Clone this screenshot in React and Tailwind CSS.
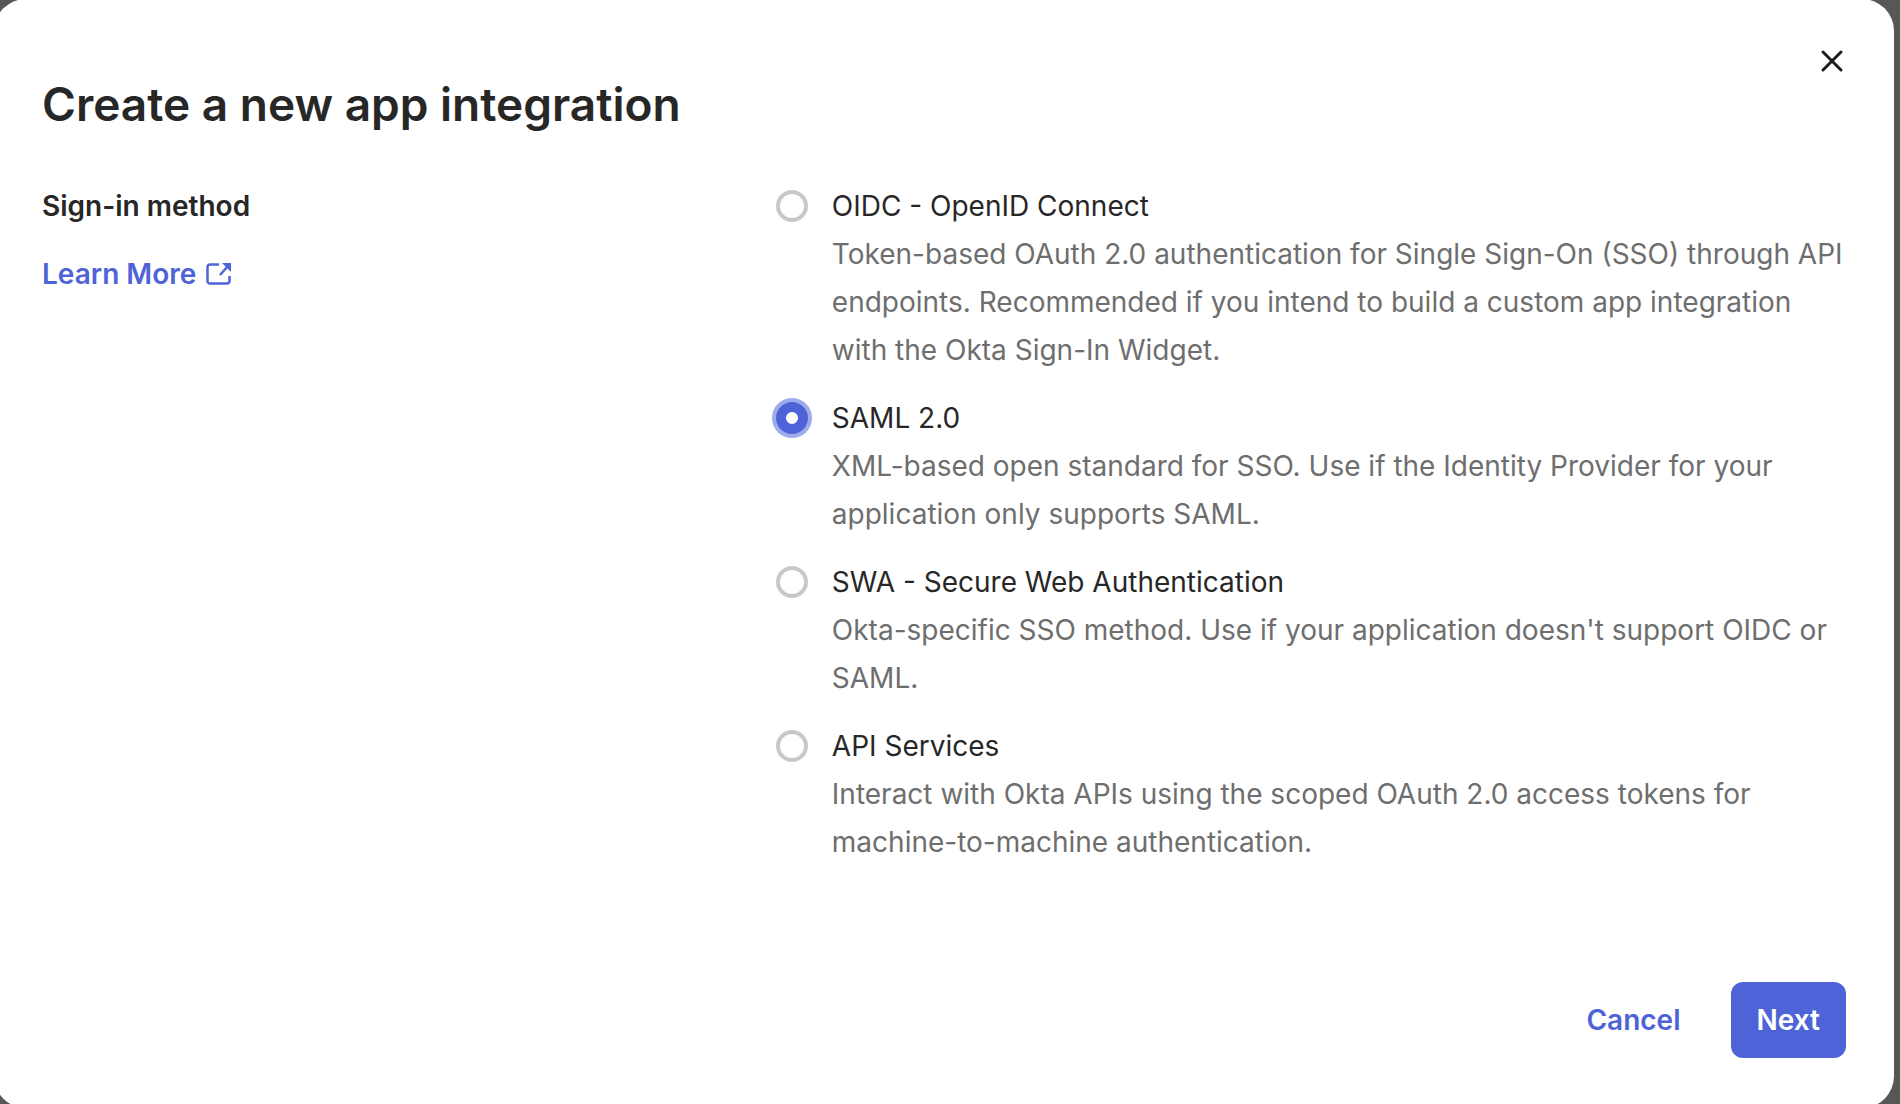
import { useState } from "react";

const signInMethods = [
  {
    id: "oidc",
    name: "OIDC - OpenID Connect",
    description:
      "Token-based OAuth 2.0 authentication for Single Sign-On (SSO) through API endpoints. Recommended if you intend to build a custom app integration with the Okta Sign-In Widget.",
  },
  {
    id: "saml",
    name: "SAML 2.0",
    description:
      "XML-based open standard for SSO. Use if the Identity Provider for your application only supports SAML.",
  },
  {
    id: "swa",
    name: "SWA - Secure Web Authentication",
    description:
      "Okta-specific SSO method. Use if your application doesn't support OIDC or SAML.",
  },
  {
    id: "api",
    name: "API Services",
    description:
      "Interact with Okta APIs using the scoped OAuth 2.0 access tokens for machine-to-machine authentication.",
  },
];

const CloseIcon = () => (
  <svg width="24" height="24" viewBox="0 0 24 24" fill="none" aria-hidden="true">
    <path d="M3 3L21 21M21 3L3 21" stroke="#1d1d21" strokeWidth="3" strokeLinecap="round" />
  </svg>
);

const ExternalIcon = () => (
  <svg width="26" height="24" viewBox="0 0 26 24" fill="none" aria-hidden="true">
    <path
      d="M13 2.5H4A2.5 2.5 0 0 0 1.5 5V19A2.5 2.5 0 0 0 4 21.5H21A2.5 2.5 0 0 0 23.5 19V14"
      stroke="currentColor"
      strokeWidth="2.5"
    />
    <path d="M14 13L22 4" stroke="currentColor" strokeWidth="2.5" />
    <path d="M16 1H25V10Z" fill="currentColor" />
  </svg>
);

const App = () => {
  const [method, setMethod] = useState("saml");

  return (
    <div className="flex min-h-screen overflow-hidden bg-[#575757] font-['Inter',sans-serif] text-[28px] leading-[48px] text-[#272727]">
      <div
        role="dialog"
        aria-labelledby="dialog-title"
        className="relative -mt-px mr-1.5 -mb-1 -ml-1.5 flex flex-1 flex-col rounded-[32px] bg-white px-12 pt-[73px] pb-[50px]"
      >
        <button type="button" aria-label="Close" className="absolute top-[50px] right-[50px]">
          <CloseIcon />
        </button>

        <h1 id="dialog-title" className="text-[46px] leading-16 font-semibold">
          Create a new app integration
        </h1>

        <div className="mt-[46px] grid grid-cols-[24fr_35fr]">
          <div className="flex flex-col items-start gap-5">
            <h2 id="method-label" className="font-semibold">Sign-in method</h2>
            <a href="#learn-more" className="flex items-center gap-2.5 font-semibold text-[#4f63d8]">
              Learn More
              <ExternalIcon />
            </a>
          </div>

          <div role="radiogroup" aria-labelledby="method-label" className="flex flex-col gap-5">
            {signInMethods.map((item) => (
              <div key={item.id} className="flex gap-6">
                <input
                  type="radio"
                  id={item.id}
                  name="method"
                  checked={method === item.id}
                  onChange={() => setMethod(item.id)}
                  aria-describedby={`${item.id}-description`}
                  className="mt-2 size-8 shrink-0 appearance-none rounded-full border-4 border-[#c8c8c8] bg-white checked:border-10 checked:border-[#4f63d8] checked:ring-4 checked:ring-[#9fabea]"
                />
                <div>
                  <label htmlFor={item.id} className="block">{item.name}</label>
                  <p id={`${item.id}-description`} className="text-[#6e6e6e]">{item.description}</p>
                </div>
              </div>
            ))}
          </div>
        </div>

        {/* Footer actions */}
        <div className="mt-auto flex justify-end gap-6 font-semibold">
          <button type="button" className="px-[26px] text-[#4f63d8]">Cancel</button>
          <button type="button" className="rounded-xl bg-[#4f63d8] px-[26px] py-3.5 text-white">
            Next
          </button>
        </div>
      </div>
    </div>
  );
};

export default App;
